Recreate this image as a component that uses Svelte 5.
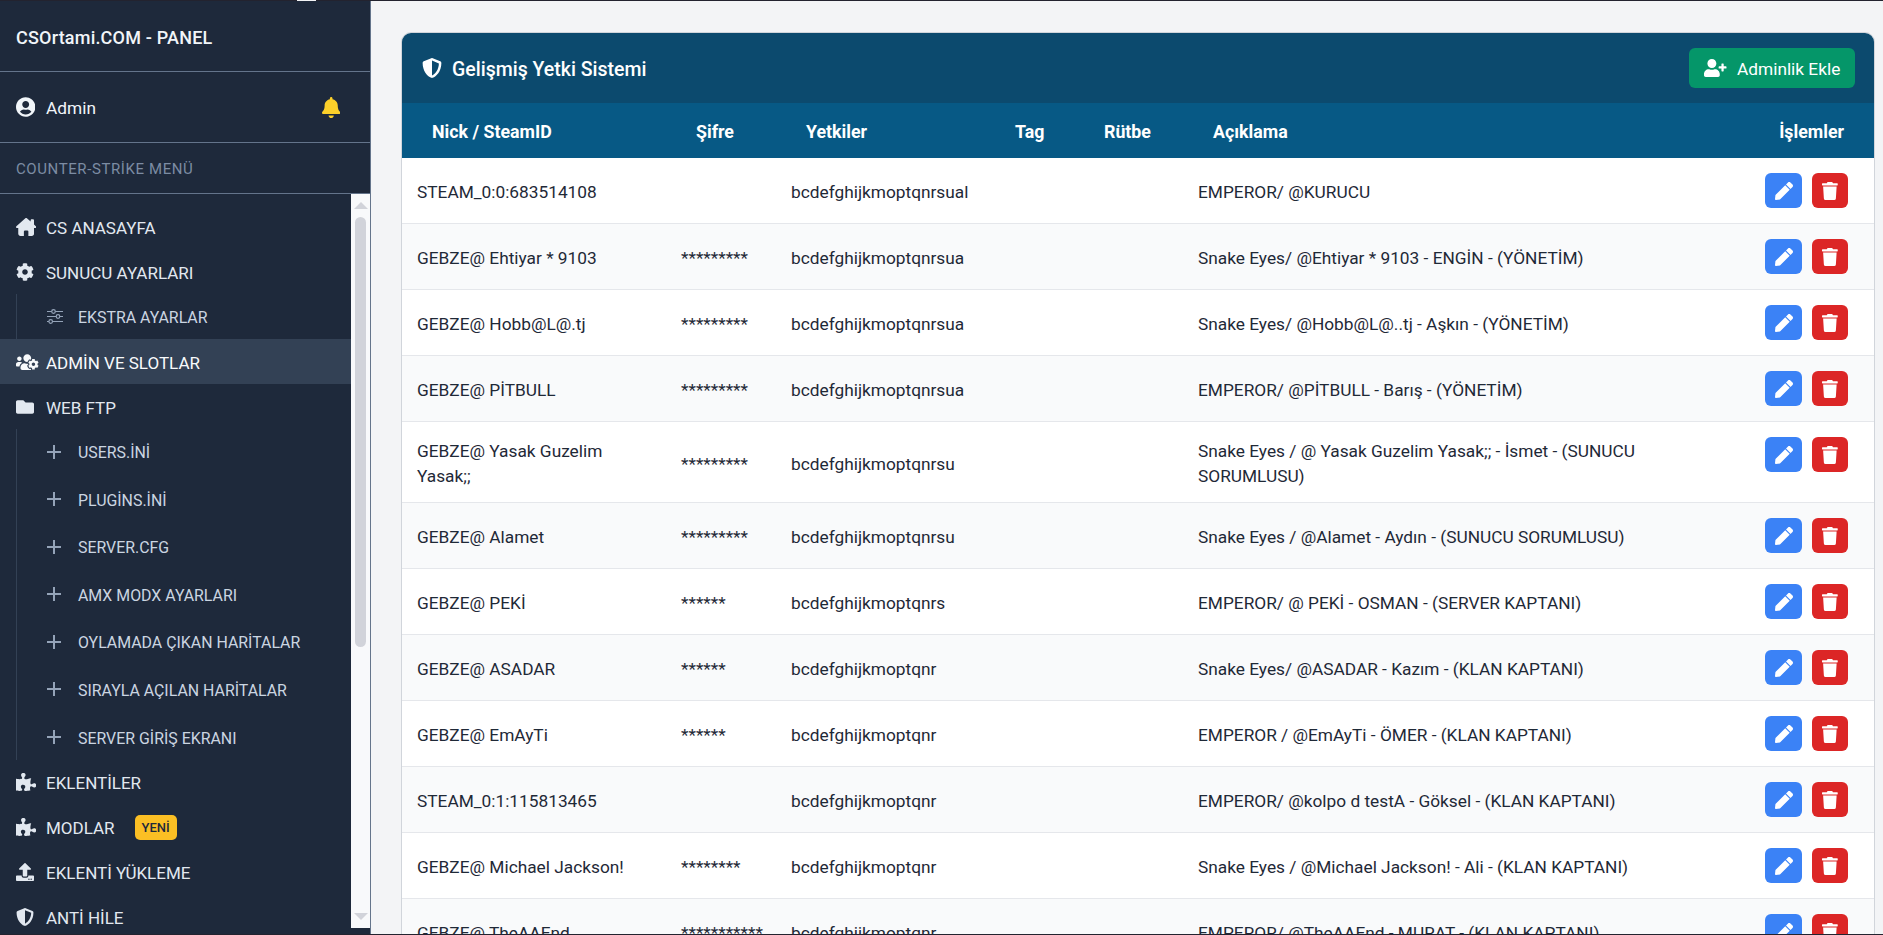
<script lang="ts">
  const icons: Record<string, { w: number; d: string }> = {
    home: { w: 576, d: 'M543.8 287.6c17 0 32-14 32-32.1c1-9-3-17-11-24L512 185V64c0-17.7-14.3-32-32-32H448c-17.7 0-32 14.3-32 32v36.7L309.5 7c-6-5-14-7-21-7s-15 1-22 8L10 231.5c-7 7-10 15-10 24c0 18 14 32.1 32 32.1h32V448c0 35.3 28.7 64 64 64H448.5c35.5 0 64.2-28.8 64-64.3l-.7-160.2h32zM224 512V384a32 32 0 0 1 32-32h64a32 32 0 0 1 32 32v128z' },
    cog: { w: 512, d: 'M487.4 315.7l-42.6-24.6c4.3-23.2 4.3-47 0-70.2l42.6-24.6c4.9-2.8 7.1-8.6 5.5-14-11.1-35.6-30-67.8-54.7-94.6-3.8-4.1-10-5.1-14.8-2.3L380.8 110c-17.9-15.4-38.5-27.3-60.8-35.1V25.8c0-5.6-3.9-10.5-9.4-11.7-36.7-8.2-74.3-7.8-109.2 0-5.5 1.2-9.4 6.1-9.4 11.7V75c-22.2 7.9-42.8 19.8-60.8 35.1L88.7 85.5c-4.9-2.8-11-1.9-14.8 2.3-24.7 26.7-43.6 58.9-54.7 94.6-1.7 5.4.6 11.2 5.5 14L67.3 221c-4.3 23.2-4.3 47 0 70.2l-42.6 24.6c-4.9 2.8-7.1 8.6-5.5 14 11.1 35.6 30 67.8 54.7 94.6 3.8 4.1 10 5.1 14.8 2.3l42.6-24.6c17.9 15.4 38.5 27.3 60.8 35.1v49.2c0 5.6 3.9 10.5 9.4 11.7 36.7 8.2 74.3 7.8 109.2 0 5.5-1.2 9.4-6.1 9.4-11.7v-49.2c22.2-7.9 42.8-19.8 60.8-35.1l42.6 24.6c4.9 2.8 11 1.9 14.8-2.3 24.7-26.7 43.6-58.9 54.7-94.6 1.5-5.5-.7-11.3-5.6-14.1zM256 336c-44.1 0-80-35.9-80-80s35.9-80 80-80 80 35.9 80 80-35.9 80-80 80z' },
    userCircle: { w: 496, d: 'M248 8C111 8 0 119 0 256s111 248 248 248 248-111 248-248S385 8 248 8zm0 96c48.6 0 88 39.4 88 88s-39.4 88-88 88-88-39.4-88-88 39.4-88 88-88zm0 344c-58.7 0-111.3-26.6-146.5-68.2 18.8-35.4 55.6-59.8 98.5-59.8 2.4 0 4.8.4 7.1 1.1 13 4.2 26.6 6.9 40.9 6.9 14.3 0 28-2.7 40.9-6.9 2.3-.7 4.7-1.1 7.1-1.1 42.9 0 79.7 24.4 98.5 59.8C359.3 421.4 306.7 448 248 448z' },
    bell: { w: 448, d: 'M224 512c35.32 0 63.97-28.65 63.97-64H160.03c0 35.35 28.65 64 63.97 64zm215.39-149.71c-19.32-20.76-55.47-51.99-55.47-154.29 0-77.7-54.48-139.9-127.94-155.16V32c0-17.67-14.32-32-31.98-32s-31.98 14.33-31.98 32v20.84C118.56 68.1 64.08 130.3 64.08 208c0 102.3-36.15 133.53-55.47 154.29-6 6.45-8.66 14.16-8.61 21.71.11 16.4 12.98 32 32.1 32h383.8c19.12 0 32-15.6 32.1-32 .05-7.55-2.61-15.27-8.61-21.71z' },
    folder: { w: 512, d: 'M464 128H272l-64-64H48C21.49 64 0 85.49 0 112v288c0 26.51 21.49 48 48 48h416c26.51 0 48-21.49 48-48V176c0-26.51-21.49-48-48-48z' },
    usersCog: { w: 640, d: 'M610.5 341.3c2.6-14.1 2.6-28.5 0-42.6l25.8-14.9c3-1.7 4.3-5.2 3.3-8.5-6.7-21.6-18.2-41.2-33.2-57.4-2.3-2.5-6-3.1-9-1.4l-25.8 14.9c-10.9-9.3-23.4-16.5-36.9-21.3v-29.8c0-3.4-2.4-6.4-5.7-7.1-22.3-5-45-4.8-66.2 0-3.3.7-5.7 3.7-5.7 7.1v29.8c-13.5 4.8-26 12-36.9 21.3l-25.8-14.9c-2.9-1.7-6.7-1.1-9 1.4-15 16.2-26.5 35.8-33.2 57.4-1 3.3.4 6.8 3.3 8.5l25.8 14.9c-2.6 14.1-2.6 28.5 0 42.6l-25.8 14.9c-3 1.7-4.3 5.2-3.3 8.5 6.7 21.6 18.2 41.1 33.2 57.4 2.3 2.5 6 3.1 9 1.4l25.8-14.9c10.9 9.3 23.4 16.5 36.9 21.3v29.8c0 3.4 2.4 6.4 5.7 7.1 22.3 5 45 4.8 66.2 0 3.3-.7 5.7-3.7 5.7-7.1v-29.8c13.5-4.8 26-12 36.9-21.3l25.8 14.9c2.9 1.7 6.7 1.1 9-1.4 15-16.2 26.5-35.8 33.2-57.4 1-3.3-.4-6.8-3.3-8.5l-25.8-14.9zM496 368.5c-26.8 0-48.5-21.8-48.5-48.5s21.8-48.5 48.5-48.5 48.5 21.8 48.5 48.5-21.7 48.5-48.5 48.5zM96 224c35.3 0 64-28.7 64-64s-28.7-64-64-64-64 28.7-64 64 28.7 64 64 64zm224 32c1.9 0 3.7-.5 5.6-.6 8.3-21.7 20.5-42.1 36.3-59.2 7.4-8 17.9-12.6 28.9-12.6 6.9 0 13.7 1.8 19.6 5.3l7.9 4.6c.8-.5 1.6-.9 2.4-1.4 7-14.6 11.2-30.8 11.2-48 0-61.9-50.1-112-112-112S208 82.1 208 144c0 61.9 50.1 112 112 112zm105.2 194.5c-2.3-1.2-4.6-2.6-6.8-3.9-8.2 4.8-15.3 9.8-27.5 9.8-10.9 0-21.4-4.6-28.9-12.6-18.3-19.8-32.3-43.9-40.2-69.6-10.7-34.5 24.9-49.7 25.8-50.3-.1-2.6-.1-5.2 0-7.8l-7.9-4.6c-3.8-2.2-7-5-9.8-8.1-3.3.2-6.5.6-9.8.6-24.6 0-47.6-6-68.5-16h-8.3C179.6 288 128 339.6 128 403.2V432c0 26.5 21.5 48 48 48h255.4c-3.7-6-6.2-12.8-6.2-20.3v-9.2zM173.1 274.6C161.5 263.1 145.6 256 128 256H64c-35.3 0-64 28.7-64 64v32c0 17.7 14.3 32 32 32h65.9c6.3-47.4 34.9-87.3 75.2-109.4z' },
    puzzle: { w: 576, d: 'M519.442 288.651c-41.519 0-59.5 31.593-82.058 31.593C377.409 320.244 432 144 432 144s-196.288 80-196.288-3.297c0-35.827 36.288-46.25 36.288-85.985C272 19.216 243.885 0 210.539 0c-34.654 0-66.366 18.891-66.366 56.346 0 41.364 31.711 59.277 31.711 81.75C175.885 207.719 0 166.758 0 166.758v333.237s178.635 41.047 178.635-28.662c0-22.473-40-40.107-40-81.471 0-37.456 29.25-56.346 63.577-56.346 33.673 0 61.788 19.216 61.788 54.717 0 39.735-36.288 50.158-36.288 85.985 0 60.803 129.675 25.73 181.23 25.73 0 0-34.725-120.101 25.827-120.101 35.962 0 46.423 36.152 86.308 36.152C556.712 416 576 387.99 576 354.443c0-34.199-18.962-65.792-56.558-65.792z' },
    upload: { w: 512, d: 'M296 384h-80c-13.3 0-24-10.7-24-24V192h-87.7c-17.8 0-26.7-21.5-14.1-34.1L242.3 5.7c7.5-7.5 19.8-7.5 27.3 0l152.2 152.2c12.6 12.6 3.7 34.1-14.1 34.1H320v168c0 13.3-10.7 24-24 24zm216-8v112c0 13.3-10.7 24-24 24H24c-13.3 0-24-10.7-24-24V376c0-13.3 10.7-24 24-24h136v8c0 30.9 25.1 56 56 56h80c30.9 0 56-25.1 56-56v-8h136c13.3 0 24 10.7 24 24zm-124 88c0-11-9-20-20-20s-20 9-20 20 9 20 20 20 20-9 20-20zm64 0c0-11-9-20-20-20s-20 9-20 20 9 20 20 20 20-9 20-20z' },
    shield: { w: 512, d: 'M466.5 83.7l-192-80a48.15 48.15 0 0 0-36.9 0l-192 80C27.7 91.1 16 108.6 16 128c0 198.5 114.5 335.7 221.5 380.3 11.8 4.9 25.1 4.9 36.9 0C360.1 472.6 496 349.3 496 128c0-19.4-11.7-36.9-29.5-44.3zM256.1 446.3l-.1-381 175.9 73.3c-3.3 151.4-82.1 261.1-175.8 307.7z' },
    userPlus: { w: 640, d: 'M624 208h-64v-64c0-8.8-7.2-16-16-16h-32c-8.8 0-16 7.2-16 16v64h-64c-8.8 0-16 7.2-16 16v32c0 8.8 7.2 16 16 16h64v64c0 8.8 7.2 16 16 16h32c8.8 0 16-7.2 16-16v-64h64c8.8 0 16-7.2 16-16v-32c0-8.8-7.2-16-16-16zm-400 48c70.7 0 128-57.3 128-128S294.7 0 224 0 96 57.3 96 128s57.3 128 128 128zm89.6 32h-16.7c-22.2 10.2-46.9 16-72.9 16s-50.6-5.8-72.9-16h-16.7C60.2 288 0 348.2 0 422.4V464c0 26.5 21.5 48 48 48h352c26.5 0 48-21.5 48-48v-41.6c0-74.2-60.2-134.4-134.4-134.4z' },
    pen: { w: 512, d: 'M290.74 93.24l128.02 128.02-277.99 277.99-114.14 12.6C11.35 513.54-1.56 500.62.14 485.34l12.7-114.22 277.9-277.88zm207.2-19.06l-60.11-60.11c-18.75-18.75-49.16-18.75-67.91 0l-56.55 56.55 128.02 128.02 56.55-56.55c18.75-18.76 18.75-49.16 0-67.91z' },
    trash: { w: 448, d: 'M432 32H312l-9.4-18.7A24 24 0 0 0 281.1 0H166.8a23.72 23.72 0 0 0-21.4 13.3L136 32H16A16 16 0 0 0 0 48v32a16 16 0 0 0 16 16h416a16 16 0 0 0 16-16V48a16 16 0 0 0-16-16zM53.2 467a48 48 0 0 0 47.9 45h245.8a48 48 0 0 0 47.9-45L416 128H32z' }
  };

  type MenuItem = {
    label: string;
    icon: string;
    active?: boolean;
    badge?: string;
    subs?: string[];
    subIcon?: 'sliders' | 'plus';
  };

  const menu: MenuItem[] = [
    { label: 'CS ANASAYFA', icon: 'home' },
    { label: 'SUNUCU AYARLARI', icon: 'cog', subs: ['EKSTRA AYARLAR'], subIcon: 'sliders' },
    { label: 'ADMİN VE SLOTLAR', icon: 'usersCog', active: true },
    {
      label: 'WEB FTP',
      icon: 'folder',
      subIcon: 'plus',
      subs: ['USERS.İNİ', 'PLUGİNS.İNİ', 'SERVER.CFG', 'AMX MODX AYARLARI', 'OYLAMADA ÇIKAN HARİTALAR', 'SIRAYLA AÇILAN HARİTALAR', 'SERVER GİRİŞ EKRANI']
    },
    { label: 'EKLENTİLER', icon: 'puzzle' },
    { label: 'MODLAR', icon: 'puzzle', badge: 'YENİ' },
    { label: 'EKLENTİ YÜKLEME', icon: 'upload' },
    { label: 'ANTİ HİLE', icon: 'shield' }
  ];

  const columns = ['Nick / SteamID', 'Şifre', 'Yetkiler', 'Tag', 'Rütbe', 'Açıklama', 'İşlemler'];

  const rows = [
    { nick: 'STEAM_0:0:683514108', pass: '', flags: 'bcdefghijkmoptqnrsual', note: 'EMPEROR/ @KURUCU' },
    { nick: 'GEBZE@ Ehtiyar * 9103', pass: '*********', flags: 'bcdefghijkmoptqnrsua', note: 'Snake Eyes/ @Ehtiyar * 9103 - ENGİN - (YÖNETİM)' },
    { nick: 'GEBZE@ Hobb@L@.tj', pass: '*********', flags: 'bcdefghijkmoptqnrsua', note: 'Snake Eyes/ @Hobb@L@..tj - Aşkın - (YÖNETİM)' },
    { nick: 'GEBZE@ PİTBULL', pass: '*********', flags: 'bcdefghijkmoptqnrsua', note: 'EMPEROR/ @PİTBULL - Barış - (YÖNETİM)' },
    { nick: 'GEBZE@ Yasak Guzelim Yasak;;', pass: '*********', flags: 'bcdefghijkmoptqnrsu', note: 'Snake Eyes / @ Yasak Guzelim Yasak;; - İsmet - (SUNUCU SORUMLUSU)' },
    { nick: 'GEBZE@ Alamet', pass: '*********', flags: 'bcdefghijkmoptqnrsu', note: 'Snake Eyes / @Alamet - Aydın - (SUNUCU SORUMLUSU)' },
    { nick: 'GEBZE@ PEKİ', pass: '******', flags: 'bcdefghijkmoptqnrs', note: 'EMPEROR/ @ PEKİ - OSMAN - (SERVER KAPTANI)' },
    { nick: 'GEBZE@ ASADAR', pass: '******', flags: 'bcdefghijkmoptqnr', note: 'Snake Eyes/ @ASADAR - Kazım - (KLAN KAPTANI)' },
    { nick: 'GEBZE@ EmAyTi', pass: '******', flags: 'bcdefghijkmoptqnr', note: 'EMPEROR / @EmAyTi - ÖMER - (KLAN KAPTANI)' },
    { nick: 'STEAM_0:1:115813465', pass: '', flags: 'bcdefghijkmoptqnr', note: 'EMPEROR/ @kolpo d testA - Göksel - (KLAN KAPTANI)' },
    { nick: 'GEBZE@ Michael Jackson!', pass: '********', flags: 'bcdefghijkmoptqnr', note: 'Snake Eyes / @Michael Jackson! - Ali - (KLAN KAPTANI)' },
    { nick: 'GEBZE@ TheΛΛEnd', pass: '***********', flags: 'bcdefghijkmoptqnr', note: 'EMPEROR/ @TheΛΛEnd - MURAT - (KLAN KAPTANI)' }
  ];
</script>

{#snippet fa(name: string)}
  <svg class="fa" viewBox="0 0 {icons[name].w} 512" fill="currentColor" fill-rule="evenodd" aria-hidden="true">
    <path d={icons[name].d} />
  </svg>
{/snippet}

{#snippet subGlyph(kind: 'sliders' | 'plus' | undefined)}
  {#if kind === 'sliders'}
    <svg class="sub-glyph" viewBox="0 0 16 15" fill="none" stroke="currentColor" stroke-width="1.2" aria-hidden="true">
      <path d="M0 2.5h4.7M8.3 2.5H16M0 7.5h9.2M12.8 7.5H16M0 12.5h1.9M5.5 12.5H16" />
      <circle cx="6.5" cy="2.5" r="1.8" />
      <circle cx="11" cy="7.5" r="1.8" />
      <circle cx="3.7" cy="12.5" r="1.8" />
    </svg>
  {:else}
    <svg class="sub-glyph plus" viewBox="0 0 14 14" fill="none" stroke="currentColor" stroke-width="2" aria-hidden="true">
      <path d="M7 0v14M0 7h14" />
    </svg>
  {/if}
{/snippet}

<div class="page">
  <div class="strip top"><span class="tick"></span></div>
  <div class="layout">
    <aside class="sidebar">
      <div class="brand"><span class="txt">CSOrtami.COM - PANEL</span></div>
      <div class="user">
        <span class="user-icon">{@render fa('userCircle')}</span>
        <span class="txt user-name">Admin</span>
        <span class="bell">{@render fa('bell')}</span>
      </div>
      <div class="menu-label"><span class="txt">COUNTER-STRİKE MENÜ</span></div>

      <div class="menu-wrap">
        <nav class="menu">
          {#each menu as item}
            <a class="item" class:active={item.active} href="#top">
              <span class="item-icon">{@render fa(item.icon)}</span>
              <span class="txt">{item.label}</span>
              {#if item.badge}<span class="badge">{item.badge}</span>{/if}
            </a>
            {#if item.subs}
              <div class="subs">
                {#each item.subs as sub}
                  <a class="sub" href="#top">
                    <span class="sub-icon">{@render subGlyph(item.subIcon)}</span>
                    <span class="txt">{sub}</span>
                  </a>
                {/each}
              </div>
            {/if}
          {/each}
        </nav>
        <div class="scrollbar">
          <span class="arrow up"></span>
          <span class="thumb"></span>
          <span class="arrow down"></span>
        </div>
      </div>
    </aside>

    <main class="main">
      <section class="card">
        <header class="card-head">
          <h1>
            <span class="head-icon">{@render fa('shield')}</span>
            <span class="txt">Gelişmiş Yetki Sistemi</span>
          </h1>
          <button class="add-btn">
            <span class="add-icon">{@render fa('userPlus')}</span>
            <span class="txt">Adminlik Ekle</span>
          </button>
        </header>
        <table>
          <thead>
            <tr>
              {#each columns as col}
                <th>{col}</th>
              {/each}
            </tr>
          </thead>
          <tbody>
            {#each rows as row}
              <tr>
                <td>{row.nick}</td>
                <td>{row.pass}</td>
                <td>{row.flags}</td>
                <td></td>
                <td></td>
                <td>{row.note}</td>
                <td class="action-cell">
                  <div class="actions">
                    <button class="icon-btn edit" aria-label="Düzenle">{@render fa('pen')}</button>
                    <button class="icon-btn del" aria-label="Sil">{@render fa('trash')}</button>
                  </div>
                </td>
              </tr>
            {/each}
          </tbody>
        </table>
      </section>
    </main>
  </div>
  <div class="strip bottom"></div>
</div>

<style>
  :global(body) {
    margin: 0;
    background: #f3f4f6;
    overflow: hidden;
  }

  .page {
    height: 935px;
    display: flex;
    flex-direction: column;
    overflow: hidden;
    font-family: Roboto, 'Noto Sans', sans-serif;
    font-size: 17.3px;
    color: #1f2937;
  }

  .strip {
    height: 1px;
    flex: none;
    background: #23232f;
    display: flex;
  }

  .tick {
    width: 19px;
    margin-left: 297px;
    background: #f3f4f6;
  }

  .layout {
    flex: 1;
    min-height: 0;
    display: flex;
  }

  .fa {
    display: block;
    height: 100%;
    width: auto;
  }

  /* Roboto sits a little higher in its box than the panel's font */
  .txt {
    padding-top: 2px;
  }

  /* sidebar */
  .sidebar {
    width: 370px;
    flex: none;
    display: flex;
    flex-direction: column;
    background: #1e293b;
    border-right: 1px solid #64748b;
    color: #e2e8f0;
    padding-bottom: 6px;
  }

  .brand,
  .user,
  .menu-label {
    flex: none;
    display: flex;
    align-items: center;
    padding: 0 16px;
    border-bottom: 1px solid #64748b;
  }

  .brand {
    height: 70px;
    font-size: 18px;
    font-weight: 500;
    letter-spacing: 0.2px;
    color: #f1f5f9;
  }

  .user {
    height: 70px;
    color: #f1f5f9;
  }

  .user-icon {
    width: 20px;
    height: 20px;
    margin-right: 10px;
  }

  .user-name {
    flex: 1;
  }

  .bell {
    width: 19px;
    height: 21px;
    color: #fcd02a;
    margin-right: 13px;
  }

  .menu-label {
    height: 50px;
    font-size: 15px;
    color: #7c8ca3;
    letter-spacing: 0.04em;
  }

  .menu-wrap {
    flex: 1;
    min-height: 0;
    display: flex;
  }

  .menu {
    flex: 1;
    min-width: 0;
    overflow: hidden;
    padding-top: 10px;
  }

  .item {
    display: flex;
    align-items: center;
    height: 45px;
    padding-left: 16px;
    color: #e2e8f0;
    font-size: 17px;
    text-decoration: none;
  }

  .item.active {
    background: #334155;
    color: #f8fafc;
  }

  .item-icon {
    width: 30px;
    height: 18px;
    flex: none;
  }

  .badge {
    margin-left: 20px;
    width: 42px;
    height: 25px;
    display: flex;
    align-items: center;
    justify-content: center;
    border-radius: 5px;
    background: #fbbf24;
    color: #1e293b;
    font-size: 13px;
    font-weight: 500;
  }

  .subs {
    display: flex;
    flex-direction: column;
    gap: 2.6px;
    margin-left: 16px;
    border-left: 1px solid #334155;
  }

  .sub {
    display: flex;
    align-items: center;
    height: 45px;
    padding-left: 30px;
    color: #cbd5e1;
    font-size: 15.9px;
    text-decoration: none;
  }

  .sub-icon {
    width: 31px;
    flex: none;
    color: #94a3b8;
  }

  .sub-glyph {
    display: block;
    width: 16px;
    height: 15px;
  }

  .sub-glyph.plus {
    width: 14px;
    height: 14px;
  }

  .scrollbar {
    width: 19px;
    flex: none;
    display: flex;
    flex-direction: column;
    align-items: center;
    background: #f8f9fb;
  }

  .arrow {
    width: 0;
    height: 0;
    border-left: 7px solid transparent;
    border-right: 7px solid transparent;
  }

  .arrow.up {
    margin-top: 8px;
    border-bottom: 7px solid #d1d3da;
  }

  .arrow.down {
    margin-top: auto;
    margin-bottom: 8px;
    border-top: 7px solid #d1d3da;
  }

  .thumb {
    width: 11px;
    height: 430px;
    margin-top: 8px;
    border-radius: 6px;
    background: #d1d3da;
  }

  /* main */
  .main {
    flex: 1;
    min-width: 0;
    overflow: hidden;
    padding: 31px 8px 0 30px;
  }

  .card {
    border: 1px solid #d1d5db;
    border-radius: 10px;
    background: #fff;
    overflow: hidden;
  }

  .card-head {
    height: 70px;
    display: flex;
    align-items: center;
    justify-content: space-between;
    padding: 0 19px 0 20px;
    background: #0c4a6e;
    color: #fff;
  }

  h1 {
    display: flex;
    align-items: center;
    margin: 0;
    font-size: 19.5px;
    font-weight: 500;
  }

  .head-icon {
    width: 20px;
    height: 20px;
    margin-right: 10px;
  }

  .add-btn {
    display: flex;
    align-items: center;
    width: 166px;
    height: 40px;
    padding: 0 0 0 15px;
    border: none;
    border-radius: 6px;
    background: #059669;
    color: #fff;
    font: inherit;
  }

  .add-icon {
    width: 23px;
    height: 18px;
    margin-right: 10px;
  }

  table {
    width: 100%;
    table-layout: fixed;
    border-collapse: separate;
    border-spacing: 0;
  }

  th {
    height: 55px;
    padding: 2px 0 0 30px;
    box-sizing: border-box;
    background: #075985;
    color: #fff;
    font-size: 17.8px;
    font-weight: 700;
    text-align: left;
  }

  th:nth-child(1) { width: 264px; }
  th:nth-child(2) { width: 110px; }
  th:nth-child(3) { width: 209px; }
  th:nth-child(4) { width: 89px; }
  th:nth-child(5) { width: 109px; }
  th:nth-child(6) { width: 567px; }

  th:last-child {
    padding: 2px 30px 0 0;
    text-align: right;
  }

  td {
    padding: 17px 15px 13px;
    border-bottom: 1px solid #e5e7eb;
    line-height: 25px;
    vertical-align: middle;
  }

  td.action-cell {
    padding: 15px;
    vertical-align: top;
  }

  tbody tr:nth-child(even) td {
    background: #f9fafb;
  }

  .actions {
    display: flex;
    gap: 10px;
  }

  .icon-btn {
    display: flex;
    align-items: center;
    justify-content: center;
    height: 35px;
    padding: 8.5px 0;
    border: none;
    border-radius: 6px;
    color: #fff;
  }

  .edit {
    width: 37px;
    background: #3b82f6;
  }

  .del {
    width: 36px;
    background: #dc2626;
  }
</style>
